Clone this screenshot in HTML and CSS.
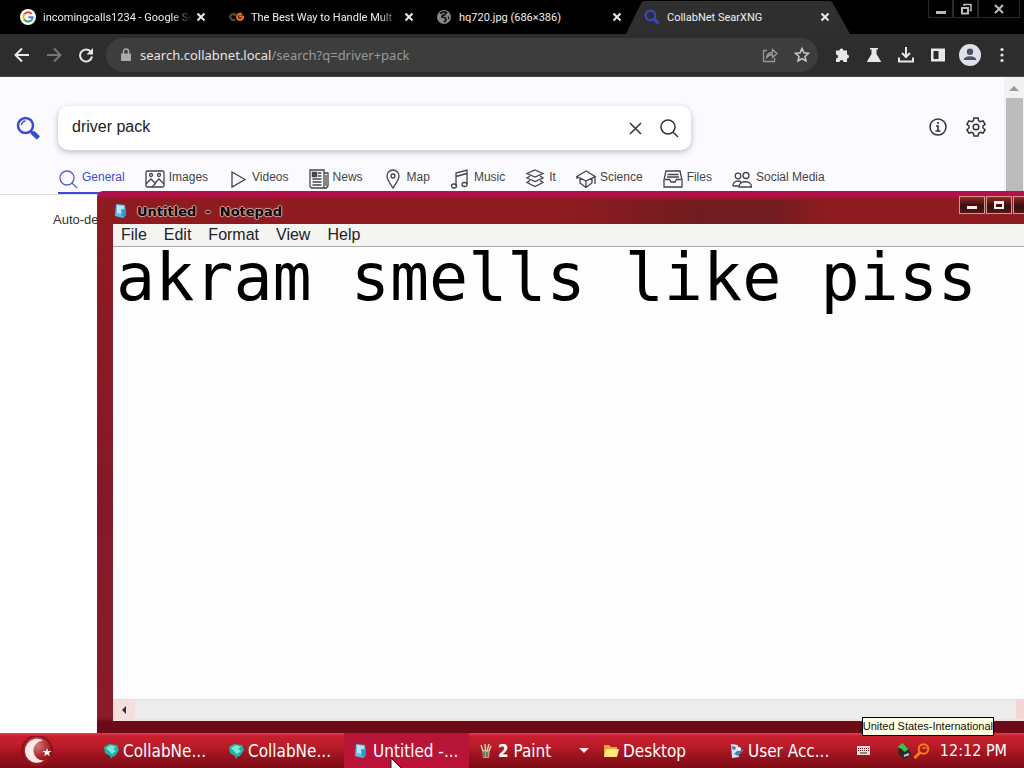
FILE: index.html
```html
<!DOCTYPE html>
<html lang="en">
<head>
<meta charset="utf-8">
<title>CollabNet SearXNG</title>
<link rel="stylesheet" href="styles.css">
</head>
<body>
<div class="screen">
  <div class="desktop">
    <section class="browser">
      <div class="tabstrip">
        <div class="tab">
          <svg class="favicon" viewBox="0 0 16 16"><circle cx="8" cy="8" r="8" fill="#fff"/><g fill="none" stroke-width="2"><path d="M11.6 5A4.6 4.6 0 0 0 4.3 5.3" stroke="#e54335"/><path d="M4.3 5.3a4.6 4.6 0 0 0 0 5.2" stroke="#f6b704"/><path d="M4.3 10.5a4.6 4.6 0 0 0 6.8 1" stroke="#34a353"/><path d="M11.1 11.5A4.6 4.6 0 0 0 12.6 8.200H8.200" stroke="#4280ef"/></g></svg>
          <button class="tab-title fade">incomingcalls1234 - Google Se</button>
          <button class="tab-close" aria-label="Close tab"><svg viewBox="0 0 10 10"><path d="M1.500 1.500l7 7M8.500 1.500l-7 7"/></svg></button>
        </div>
        <div class="tab">
          <svg class="favicon" viewBox="0 0 16 16" fill="none" stroke-width="2.200"><path d="M7 5.500A3 3 0 1 0 7 10.500" stroke="#54433f"/><path d="M14 5.500a3 3 0 1 0 .4 4.200l.6-2.200h-4" stroke="#f26b21"/><path d="M5 6a3 3 0 0 1 4 1" stroke="#54433f"/></svg>
          <button class="tab-title fade">The Best Way to Handle Mult</button>
          <button class="tab-close" aria-label="Close tab"><svg viewBox="0 0 10 10"><path d="M1.500 1.500l7 7M8.500 1.500l-7 7"/></svg></button>
        </div>
        <div class="tab">
          <svg class="favicon" viewBox="0 0 16 16"><circle cx="8" cy="8" r="7" fill="#85858a"/><path d="M4 4.500c2-1.500 5-2 6.500-1L8.500 6l-2 .5L6 8l3 .7 1.200 2L8 13.300" fill="none" stroke="#111" stroke-width="1.700"/><path d="M11.500 6.500l2 2-1 2.500z" fill="#111"/></svg>
          <button class="tab-title">hq720.jpg (686×386)</button>
          <button class="tab-close" aria-label="Close tab"><svg viewBox="0 0 10 10"><path d="M1.500 1.500l7 7M8.500 1.500l-7 7"/></svg></button>
        </div>
        <div class="tab active">
          <svg class="favicon" viewBox="0 0 16 16" fill="none" stroke="#3b46c8"><circle cx="6.500" cy="6.500" r="4.800" stroke-width="2.200"/><path d="M10.500 10.500l4 4" stroke-width="3"/></svg>
          <button class="tab-title">CollabNet SearXNG</button>
          <button class="tab-close" aria-label="Close tab"><svg viewBox="0 0 10 10"><path d="M1.500 1.500l7 7M8.500 1.500l-7 7"/></svg></button>
        </div>
        <div class="win-buttons">
          <button aria-label="Minimize"><svg viewBox="0 0 12 12"><path d="M1 8h10v3H1z" fill="#bbb"/></svg></button>
          <button aria-label="Restore"><svg viewBox="0 0 12 12" fill="none" stroke="#bbb"><path d="M4 3V1.500h7v6H9.500" stroke-width="1.500"/><path d="M2 5h6v5.500H2z" stroke-width="2"/></svg></button>
          <button aria-label="Close"><svg viewBox="0 0 12 12"><path d="M2 2l8 8M10 2l-8 8" stroke="#bbb" stroke-width="2"/></svg></button>
        </div>
      </div>
      <div class="toolbar">
        <button class="tool" aria-label="Back"><svg viewBox="0 0 16 16" fill="none" stroke="#e8e8e8" stroke-width="2"><path d="M15 8H2M8 1.500L1.500 8 8 14.500"/></svg></button>
        <button class="tool" aria-label="Forward"><svg viewBox="0 0 16 16" fill="none" stroke="#777" stroke-width="2"><path d="M1 8h13M8 1.500L14.500 8 8 14.500"/></svg></button>
        <button class="tool" aria-label="Reload"><svg viewBox="0 0 16 16"><path d="M13 5A6 6 0 1 0 14 9.500" fill="none" stroke="#e8e8e8" stroke-width="2"/><path d="M15 1v6.500H8.500z" fill="#e8e8e8"/></svg></button>
        <div class="address">
          <svg class="lock" viewBox="0 0 12 14"><path d="M1 5.500h10V13H1z" fill="#aaa"/><path d="M3.500 6V3.500a2.500 2.500 0 0 1 5 0V6" fill="none" stroke="#aaa" stroke-width="1.500"/></svg>
          <a class="url" href="#">search.collabnet.local<span>/search?q=driver+pack</span></a>
          <button class="tool" aria-label="Share"><svg viewBox="0 0 16 16" fill="none" stroke="#999" stroke-width="1.300"><path d="M5 3.500H1.500v11h11V11M4.500 10.500c.5-3.500 3-5 6-5V2.500l4.500 4-4.500 4v-3c-2.500 0-4 .5-6 3z"/></svg></button>
          <button class="tool" aria-label="Bookmark"><svg viewBox="0 0 16 16" fill="none" stroke="#ccc" stroke-width="1.500"><path d="M8 1.500l1.900 4.300 4.600.5-3.500 3.100 1 4.600L8 11.600 4 14l1-4.600L1.500 6.300l4.600-.5z"/></svg></button>
        </div>
        <button class="tool" aria-label="Extensions"><svg viewBox="0 0 16 16" fill="#e8e8e8"><path d="M2 3.500h3.500a2 2 0 1 1 4 0H13v4a2 2 0 1 1 0 4V15H9.500a2 2 0 0 0-4 0H2v-3.500a2 2 0 0 0 0-4z"/></svg></button>
        <button class="tool" aria-label="Experiments"><svg viewBox="0 0 16 16" fill="#e8e8e8"><path d="M4 1h8v1.500h-1.500V7l4.500 7.500v.5H1v-.5L5.500 7V2.500H4z"/></svg></button>
        <button class="tool" aria-label="Downloads"><svg viewBox="0 0 16 16" fill="none" stroke="#e8e8e8" stroke-width="2"><path d="M8 0v9.500M4 6l4 4 4-4M1 10.500V14.500h14V10.500"/></svg></button>
        <button class="tool" aria-label="Side panel"><svg viewBox="0 0 16 16"><path d="M1 1.500h14v13H1z" fill="#e8e8e8"/><path d="M3.500 4h5v8h-5z" fill="#2b2b2b"/></svg></button>
        <button class="tool profile" aria-label="Profile"><svg viewBox="0 0 22 22"><circle cx="11" cy="11" r="11" fill="#dfe1e8"/><circle cx="11" cy="7.800" r="3.200" fill="#4b5068"/><path d="M4.800 16c0-5 12.400-5 12.400 0z" fill="#4b5068"/></svg></button>
        <button class="tool" aria-label="Menu"><svg viewBox="0 0 16 16" fill="#e8e8e8"><circle cx="8" cy="2.500" r="1.600"/><circle cx="8" cy="8" r="1.600"/><circle cx="8" cy="13.500" r="1.600"/></svg></button>
      </div>
      <div class="viewport">
        <main class="page">
          <header class="page-head">
            <div class="search-row">
              <a class="logo" href="#" aria-label="SearXNG"><svg viewBox="0 0 24 24" fill="none" stroke="#3b4ad8"><circle cx="9.500" cy="9.500" r="7.500" stroke-width="2.500"/><path d="M5.500 9a4 4 0 0 1 4-4" stroke-width="1.500"/><path d="M15 15.500l2 2" stroke-width="3"/><path d="M16.500 16.500l6 5.500" stroke-width="4.500"/></svg></a>
              <form class="search-box">
                <input type="text" value="driver pack" aria-label="Search">
                <button type="button" aria-label="Clear"><svg viewBox="0 0 20 20"><path d="M5 5l11 11M16 5L5 16"/></svg></button>
                <button type="button" aria-label="Search"><svg viewBox="0 0 20 20"><circle cx="9" cy="9" r="7"/><path d="M14 14l5 5"/></svg></button>
              </form>
              <nav class="page-links">
                <a href="#" aria-label="About"><svg viewBox="0 0 20 20"><circle cx="10" cy="10" r="8"/><path d="M8 9h2v5M7.500 14h5M10 5v2" stroke-width="1.600"/></svg></a>
                <a href="#" aria-label="Preferences"><svg viewBox="0 0 20 20"><path d="M8 1h4l.6 2.700 1.800 1 2.700-.8 2 3.400L17 9v2l2.100 1.700-2 3.400-2.700-.8-1.800 1L12 19H8l-.6-2.700-1.800-1-2.700.8-2-3.400L3 11V9L.9 7.300l2-3.400 2.700.8 1.800-1z"/><circle cx="10" cy="10" r="2.800"/></svg></a>
              </nav>
            </div>
            <nav class="categories">
              <a class="selected" href="#"><svg viewBox="0 0 20 20"><circle cx="9" cy="9" r="7"/><path d="M14 14l5 5"/></svg>General</a>
              <a href="#"><svg viewBox="0 0 20 20"><rect x="1" y="2" width="18" height="16" rx="1.500"/><path d="M1 15l5-5 4 4 4-4 5 5M7 18l4-4"/><circle cx="6" cy="6" r="1.500"/><circle cx="14" cy="6" r="1.500"/></svg>Images</a>
              <a href="#"><svg viewBox="0 0 20 20"><path d="M4 3l13 7.500L4 18z"/></svg>Videos</a>
              <a href="#"><svg viewBox="0 0 20 20"><path d="M1 1h14v18H2.500L1 17.500zM15 4h4v13l-1.500 2H15M17 6v11M3.500 10h9M3.500 13h9M3.500 16h9M9 4h3.500M9 7h3.500"/><path d="M4 4h3v3H4z" stroke-width="2.500"/></svg>News</a>
              <a href="#"><svg viewBox="0 0 20 20"><path d="M10 19C7 14 4 11 4 7a6 6 0 0 1 12 0c0 4-3 7-6 12z"/><circle cx="10" cy="7" r="2"/></svg>Map</a>
              <a href="#"><svg viewBox="0 0 20 20"><path d="M6 17V4l11-3v14M6 7.500l11-3"/><ellipse cx="4" cy="17" rx="2.500" ry="2"/><ellipse cx="14.500" cy="15.500" rx="2.500" ry="2"/></svg>Music</a>
              <a href="#"><svg viewBox="0 0 20 20"><path d="M10 1l8 3.500-8 3.500-8-3.500zM5 7L2 9l8 3.500L18 9l-3-2M5 11.500l-3 2 8 4 8-4-3-2"/></svg>It</a>
              <a href="#"><svg viewBox="0 0 20 20"><path d="M10 2L.8 7.500 10 12l9.200-4.500zM4 9.500V14l6 4.500 6-4.500V9.500M10 12v6.500M19 8v7M1 8v2"/></svg>Science</a>
              <a href="#"><svg viewBox="0 0 20 20"><path d="M1 11L3 2h14l2 9v7H1zM2 10.500h4.500l1.500 2.500h4l1.500-2.500H18M4.500 5.500h11M4 8h12"/></svg>Files</a>
              <a href="#"><svg viewBox="0 0 20 20"><circle cx="6" cy="7" r="2.800"/><circle cx="14" cy="6.500" r="3"/><path d="M1 17c0-6 7-6 8.500-3M7 18c0-7 12.500-7 12.500 0zM1 17h6"/></svg>Social Media</a>
            </nav>
          </header>
          <p class="detect">Auto-detect</p>
        </main>
        <div class="scrollbar"><span class="scroll-up"></span><span class="scroll-thumb"></span></div>
      </div>
    </section>

    <section class="notepad">
      <div class="titlebar">
        <svg class="app-icon" viewBox="0 0 16 16"><path d="M3 1l9 1 1 10-3 3-8-2z" fill="#5bbce6"/><path d="M4 2l7 1-1 8-6-1z" fill="#b9e6f4"/><path d="M8 6l5 1v5l-4 2z" fill="#249bd0"/></svg>
        <h1>Untitled&nbsp; -&nbsp; Notepad</h1>
        <div class="caption-buttons">
          <button aria-label="Minimize"><svg viewBox="0 0 12 12"><path d="M1 7h10v3H1z"/></svg></button>
          <button aria-label="Maximize"><svg viewBox="0 0 12 12"><path d="M1 2h10v8H1zM3 5v3h6V5z" fill-rule="evenodd"/></svg></button>
          <button aria-label="Close"></button>
        </div>
      </div>
      <div class="notepad-body">
        <nav class="menubar"><button>File</button><button>Edit</button><button>Format</button><button>View</button><button>Help</button></nav>
        <textarea aria-label="Document" spellcheck="false" wrap="off">akram smells like piss</textarea>
        <div class="hscroll"><button aria-label="Scroll left"></button><span></span></div>
      </div>
    </section>
    <div class="tooltip">United States-International</div>
  </div>

  <footer class="taskbar">
    <button class="start" aria-label="Start"><svg viewBox="0 0 36 30"><defs><radialGradient id="orb" cy=".3"><stop offset="0" stop-color="#d97a78"/><stop offset="1" stop-color="#9d1820"/></radialGradient></defs><circle cx="18" cy="15" r="16" fill="#8e1019"/><circle cx="18" cy="15" r="14" fill="url(#orb)"/><path d="M24 4.500a12 12 0 1 0 1 20 8.500 8.500 0 1 1-1-20z" fill="#ffe9e4"/><path d="M28 12l1 3h3.500l-2.700 2 1 3.300-2.800-2-2.800 2 1-3.300-2.700-2H27z" fill="#fff"/></svg></button>
    <nav class="tasks">
      <button><svg viewBox="0 0 16 16"><path d="M1 4l5-3 8 1 2 5-4 6-3 1-1 2-1-3-5-3z" fill="#1eb5a4"/><path d="M3 5l5-3 5 2-3 2 3 2-4 3-3-3z" fill="#7ce9d8"/></svg><span>CollabNe...</span></button>
      <button><svg viewBox="0 0 16 16"><path d="M1 4l5-3 8 1 2 5-4 6-3 1-1 2-1-3-5-3z" fill="#1eb5a4"/><path d="M3 5l5-3 5 2-3 2 3 2-4 3-3-3z" fill="#7ce9d8"/></svg><span>CollabNe...</span></button>
      <button class="current"><svg viewBox="0 0 16 16"><path d="M3 1l9 1 1 10-3 3-8-2z" fill="#5bbce6"/><path d="M4 2l7 1-1 8-6-1z" fill="#b9e6f4"/><path d="M8 6l5 1v5l-4 2z" fill="#249bd0"/></svg><span>Untitled -...</span></button>
      <button><svg viewBox="0 0 16 16"><path d="M4 7h8l-1 8H5z" fill="#b0a184"/><path d="M5 8L3 2M7.500 8L7 1M9 8l2-7M11 8l2-5" stroke="#d6cfaa" stroke-width="1.500"/><path d="M6 9v5M9 9v5" stroke="#57472f"/></svg><span><b>2</b> Paint</span><i class="arrow"></i></button>
      <button><svg viewBox="0 0 16 16"><path d="M1 2h5l2 2h6v10H1z" fill="#e5a834"/><path d="M3 6h13l-2 8H1z" fill="#ffe680"/></svg><span>Desktop</span></button>
      <button><svg viewBox="0 0 16 16"><path d="M3 1l7 1 1 12-7 1z" fill="#d3e6f6"/><path d="M4 3l4 1-1 3-3-1zM6 11l5-5 5 1-6 6z" fill="#4d7eac"/><circle cx="11" cy="6" r="2" fill="#f4f4ff"/></svg><span>User Acc...</span></button>
    </nav>
    <div class="tray">
      <svg class="keyboard" viewBox="0 0 13 9"><path d="M0 0h13v9H0z" fill="#f5ded5"/><path d="M1 2.500h11M1 4.500h11" stroke="#58131a" stroke-dasharray="1 1"/><path d="M3 7h7" stroke="#58131a"/></svg>
      <svg viewBox="0 0 16 16"><path d="M2 5l8-2 5 9-7 4-6-5z" fill="#222c2a"/><path d="M5 6l-4-2 5-4 2 2 4 4-4 3z" fill="#36c44c"/><path d="M7 12l5-2 1 2-5 2z" fill="#bfc9c4"/></svg>
      <svg viewBox="0 0 16 16" fill="none" stroke="#f08018"><circle cx="10" cy="6" r="4.800" stroke-width="2"/><path d="M6.500 9.500L1 15" stroke-width="3"/><path d="M9 5h4" stroke-width="1.500"/></svg>
      <time>12:12 PM</time>
    </div>
    <svg class="cursor" viewBox="0 0 14 22"><path d="M1 1v17l4-4 3 7 3-1-3-7h5z" fill="#fff" stroke="#222"/></svg>
  </footer>
</div>
</body>
</html>
```
FILE: styles.css
```css
* { box-sizing: border-box; }
body { margin: 0; font-family: "Liberation Sans", Arial, sans-serif; }
button { border: 0; padding: 0; background: none; font: inherit; color: inherit; display: flex; align-items: center; }
a { color: inherit; text-decoration: none; }
svg { display: block; flex: none; }

.screen { height: 100vh; display: flex; flex-direction: column; overflow: hidden; position: relative; }
.desktop { flex: 1; min-height: 0; position: relative; z-index: 1; }
.browser { height: 100%; display: flex; flex-direction: column; overflow: hidden; }

.tabstrip { display: flex; height: 34px; flex: none; background: #000; color: #eee; padding-left: 12px; font: 11px Roboto, sans-serif; }
.tab { flex: 0 1 208px; min-width: 0; display: flex; align-items: center; padding: 0 14px 0 8px; position: relative; }
.favicon { width: 16px; height: 16px; margin-right: 7px; position: relative; }
.tab-title { flex: 1; min-width: 0; display: block; text-align: left; overflow: hidden; white-space: nowrap; position: relative; }
.tab-title.fade { mask-image: linear-gradient(to right, #000 86%, transparent); }
.tab-close { position: relative; margin-left: 4px; }
.tab-close svg { width: 10px; height: 10px; stroke: #eee; stroke-width: 2; }
.tab.active::before { content: ""; position: absolute; left: -10px; right: -6px; top: 0; bottom: 0; background: #2f2f2f; clip-path: polygon(7% 6%, 8% 3%, 91% 3%, 92% 6%, 100% 100%, 0 100%); }
.win-buttons { margin-left: auto; display: flex; height: 18px; padding-right: 4px; }
.win-buttons button { width: 25px; justify-content: center; border: 1px solid #2a2a2a; border-top: 0; }
.win-buttons button:last-child { width: 42px; }
.win-buttons svg { width: 12px; height: 12px; }

.toolbar { height: 43px; flex: none; display: flex; align-items: center; gap: 8px; padding: 0 10px; background: #2d2d2d; border-bottom: 1px solid #48484a; }
.tool { width: 24px; height: 24px; justify-content: center; flex: none; }
.tool svg { width: 16px; height: 16px; }
.profile svg { width: 22px; height: 22px; }
.address { flex: 1; min-width: 0; height: 34px; margin-right: 4px; border-radius: 17px; background: #3d3d3d; display: flex; align-items: center; gap: 8px; padding: 0 4px 0 14px; }
.lock { width: 12px; height: 14px; }
.url { flex: 1; color: #e4e4e4; font: 13px "Noto Sans", sans-serif; white-space: nowrap; overflow: hidden; }
.url span { color: #999; }

.viewport { flex: 1; min-height: 0; display: flex; background: #fff; }
.page { flex: 1; min-width: 0; color: #333; }
.page-head { background: #fbfbff; border-bottom: 1px solid #ddd; padding-top: 29px; }
.search-row { display: flex; align-items: center; padding: 0 18px 0 16px; }
.logo { width: 42px; }
.logo svg { width: 24px; height: 24px; }
.search-box { flex: 0 1 633px; height: 44px; display: flex; align-items: center; gap: 14px; padding: 0 12px 0 14px; background: #fff; border-radius: 10px; box-shadow: 0 2px 6px rgba(0,0,0,.25); }
.search-box input { flex: 1; min-width: 0; border: 0; outline: 0; padding: 0 0 3px; background: none; font: 16px "Liberation Sans", Arial, sans-serif; color: #222; }
.search-box svg, .page-links svg { width: 20px; height: 20px; fill: none; stroke: #333; stroke-width: 1.500; }
.page-links { margin-left: auto; display: flex; gap: 18px; padding-bottom: 3px; }
.categories { display: flex; gap: 20px; padding: 15px 0 0 58px; font-size: 12px; color: #444; }
.categories a { display: flex; height: 29px; line-height: 24px; gap: 4px; white-space: nowrap; }
.categories svg { width: 20px; height: 20px; margin-top: 4px; fill: none; stroke: #444; stroke-width: 1.300; }
.categories .selected { color: #3b4ad8; border-bottom: 2px solid #3b4ad8; }
.categories .selected svg { stroke: #5260c8; }
.detect { margin: 16px 0 0 53px; font-size: 13px; line-height: 18px; }
.scrollbar { width: 20px; background: #f1f1f1; display: flex; flex-direction: column; align-items: center; }
.scroll-up { margin: 9px 0 7px; border: 5px solid transparent; border-top: 0; border-bottom-color: #999; }
.scroll-thumb { width: 17px; flex: 1; background: #bcbcbc; }

.notepad { position: absolute; left: 97px; top: 191px; right: 0; bottom: 0; overflow: hidden; display: flex; flex-direction: column; padding: 0 0 12px 16px; border-radius: 6px 0 0 0; background: linear-gradient(#b4104c 0, #b4104c 4px, #8e1b20 9px, #85192a 60%, #8a1c28 97%, #6c0a18 98%); }
.titlebar { height: 33px; flex: none; display: flex; align-items: center; padding-top: 7px; background: linear-gradient(to right, transparent 50%, #701c20 65%, #701c20 72%, transparent 78%) 0 9px no-repeat; }
.app-icon { width: 16px; height: 16px; margin-right: 8px; }
.titlebar h1 { margin: 0; flex: 1; font: bold 13px "DejaVu Sans", sans-serif; color: #000; text-shadow: 1px 0 1px #d9a9a4, -1px 0 1px #d9a9a4, 0 1px 1px #d9a9a4, 0 -1px 1px #d9a9a4; }
.caption-buttons { display: flex; gap: 1px; margin-top: -12px; }
.caption-buttons button { width: 26px; height: 18px; justify-content: center; border: 1px solid #d49a88; background: linear-gradient(#9a2530, #35100f 55%, #541818); }
.caption-buttons button:last-child { width: 11px; border-right: 0; }
.caption-buttons svg { width: 12px; height: 12px; fill: #f8eee4; }
.notepad-body { flex: 1; min-height: 0; display: flex; flex-direction: column; background: #fff; border-bottom: 2px solid #f6dedc; }
.menubar { height: 23px; flex: none; display: flex; gap: 17px; padding-left: 8px; font-size: 16px; color: #222; background: #f4f4f3; border-bottom: 1px solid #a8a8a8; }
.notepad textarea { flex: 1; min-height: 0; width: 100%; border: 0; outline: 0; resize: none; padding: 0 3px; margin: 0; overflow: hidden; background: #fefefe; color: #000; font: 65px/62px "DejaVu Sans Mono", monospace; }
.hscroll { height: 20px; flex: none; display: flex; background: #ececec; border-top: 1px solid #ddd; }
.hscroll button { width: 22px; justify-content: center; background: #f5dfdc; }
.hscroll button::before { content: ""; border: 4px solid transparent; border-left: 0; border-right-color: #333; }
.hscroll span { margin-left: auto; width: 8px; background: #f5d4d4; }
.tooltip { position: absolute; right: 30px; bottom: -3px; border: 1px solid #000; background: #fffee4; font-size: 11px; line-height: 17px; color: #111; white-space: nowrap; }

.taskbar { height: 35px; flex: none; display: flex; position: relative; color: #fff; font: 17px "DejaVu Sans Condensed", "DejaVu Sans", sans-serif; background: linear-gradient(#e3404d 0, #c7202f 3px, #bd1c2a 35%, #a01420 60%, #7c0b16 100%); }
.start { width: 94px; padding-left: 19px; flex: none; }
.start svg { width: 36px; height: 30px; }
.tasks { flex: 1; min-width: 0; display: grid; grid-template-columns: repeat(6, 1fr); }
.tasks button { min-width: 0; gap: 4px; padding-left: 9px; white-space: nowrap; }
.tasks svg { width: 16px; height: 16px; }
.tasks .current { background: linear-gradient(#b51638, #bc1337); }
.arrow { margin: 0 5px 0 auto; border: 5px solid transparent; border-bottom: 0; border-top-color: #ffe8e4; }
.tray { width: 180px; flex: none; display: flex; align-items: center; padding: 0 17px 0 13px; font-size: 16px; }
.tray svg { width: 17px; height: 16px; }
.tray .keyboard { width: 13px; height: 9px; margin-right: auto; }
.tray time { margin-left: 10px; }
.cursor { position: absolute; left: 390px; top: 24px; width: 14px; height: 22px; }
```
